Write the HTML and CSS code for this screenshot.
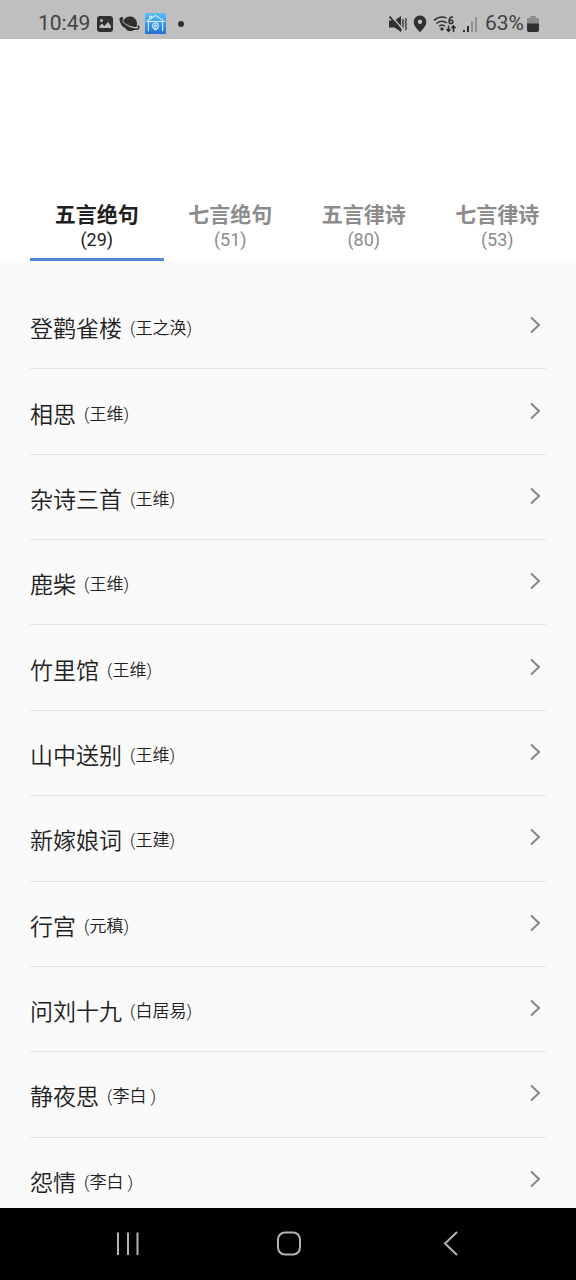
FILE: index.html
```html
<!DOCTYPE html>
<html lang="zh-CN">
<head>
<meta charset="utf-8">
<meta name="viewport" content="width=device-width, initial-scale=1">
<title>五言绝句</title>
<link rel="stylesheet" href="styles.css">
</head>
<body>
<div class="screen">
  <div class="status">
    <div class="status-left">
      <span class="clock">10:49</span>
      <svg width="18" height="18" viewBox="0 0 18 18" aria-hidden="true"><path fill="#303030" fill-rule="evenodd" d="M4 1h10a3 3 0 0 1 3 3v10a3 3 0 0 1-3 3H4a3 3 0 0 1-3-3V4a3 3 0 0 1 3-3zM3.500 13h11.500v-2L12 7l-3.500 4L6 8.500 3.500 11zM5.500 4a1.500 1.500 0 1 0 0 3 1.500 1.500 0 0 0 0-3z"/></svg>
      <svg width="21" height="18" viewBox="0 0 21 18" aria-hidden="true"><path fill="#303030" d="M4 6.500C5.500 2.500 9 1 12 1.500c3.500.6 6 3.500 6 7.500 0 1-.2 2-.6 3C12 12 7 9.500 4 6.500zM4.500 9.500c3.500 2.500 7 4 11.500 4.500-3 3.500-9.500 3-11.500-4.500z"/><path d="M4 3C1.500 2.500.7 4 1.500 5.700 3.500 10 12 14.500 17.500 14.200c2.500-.2 2.800-1.700 1.500-3.700" fill="none" stroke="#303030" stroke-width="1.600"/><path d="M4 3.500C1 5.500 2 9 5.500 12" fill="none" stroke="#303030" stroke-width="2"/></svg>
      <svg width="21" height="21" viewBox="0 0 22 22" aria-hidden="true"><defs><linearGradient id="sky" x1="0" y1="0" x2="0" y2="1"><stop offset="0" stop-color="#59c0f6"/><stop offset="1" stop-color="#2270d2"/></linearGradient></defs><rect width="22" height="22" rx="1" fill="url(#sky)"/><g fill="none" stroke="#dff4ff" stroke-width="1.100"><path d="M1.500 9 11 2.500 20.500 9h-19M3.500 9v10M18.500 9v10M5 6V3.500h2V5"/><circle cx="11" cy="13.500" r="3"/><circle cx="11" cy="13.500" r="1"/><path d="M9.500 17.500h3"/></g></svg>
      <span class="dot"></span>
    </div>
    <div class="status-right">
      <svg width="18" height="18" viewBox="0 0 18 18" aria-hidden="true"><path fill="#303030" d="M0 5.500h5.500L12 1v16l-6.500-4.500H0z"/><path d="m2 .5 12 14" stroke="#bfbfbf" stroke-width="1.500"/><path d="m.5 1.500 12 14" stroke="#303030" stroke-width="1.800"/><path d="M13.500 4l1 1.700-1 1.700 1 1.700-1 1.700 1 1.700M16.500 3l.8 2-.8 2 .8 2-.8 2 .8 2-.8 2" fill="none" stroke="#303030" stroke-width="1.200"/></svg>
      <svg width="14" height="18" viewBox="0 0 14 18" aria-hidden="true"><path fill="#303030" fill-rule="evenodd" d="M7 .5A6.300 6.300 0 0 0 .7 6.800C.7 11 4 14 7 17.300c3-3.300 6.300-6.300 6.300-10.500A6.300 6.300 0 0 0 7 .5zm0 4a2.200 2.200 0 1 1 0 4.400 2.200 2.200 0 0 1 0-4.400z"/></svg>
      <svg width="24" height="18" viewBox="0 0 24 18" aria-hidden="true"><g fill="none" stroke="#303030" stroke-width="1.500"><path d="M1 5.500C5 1.700 10 1.700 13.500 3M3.500 8.500c3-2.800 7.500-2.800 10.500-.5M6 11.300c1.800-1.600 4.200-1.600 6 0M20 2c-3-.5-4 1.500-4 4.500M18 4.900a1.800 1.800 0 1 0 0 3.700 1.800 1.800 0 0 0 0-3.700"/><path d="M15.500 10.500v5.500M13.500 14l2 2.300 2-2.300M20.500 17v-5.500M18.500 13.300l2-2.300 2 2.300"/></g><circle cx="9" cy="14" r="1.700" fill="#303030"/></svg>
      <svg width="16" height="18" viewBox="0 0 16 18" aria-hidden="true"><path fill="#303030" d="M0 15h2v2H0zM4 11h2v6H4z"/><path fill="#929292" d="M8 6h2v11H8zM12 2h2v15h-2z"/></svg>
      <span class="percent">63%</span>
      <svg width="12" height="18" viewBox="0 0 12 18" aria-hidden="true"><path fill="#8b8b8b" d="M3.500 1h5v2H11a1 1 0 0 1 1 1v6H0V4a1 1 0 0 1 1-1h2.500z"/><path fill="#303030" d="M0 8.500h12V15a2 2 0 0 1-2 2H2a2 2 0 0 1-2-2z"/></svg>
    </div>
  </div>

  <header class="tabs" role="tablist">
    <button class="tab tab-active" role="tab" aria-selected="true"><span class="tab-name">五言绝句</span><span class="tab-count">(29)</span></button>
    <button class="tab" role="tab" aria-selected="false"><span class="tab-name">七言绝句</span><span class="tab-count">(51)</span></button>
    <button class="tab" role="tab" aria-selected="false"><span class="tab-name">五言律诗</span><span class="tab-count">(80)</span></button>
    <button class="tab" role="tab" aria-selected="false"><span class="tab-name">七言律诗</span><span class="tab-count">(53)</span></button>
  </header>

  <main class="content">
    <div class="poems">
      <a class="poem" href="#"><span class="title">登鹳雀楼</span><span class="author">(王之涣)</span><svg class="chevron" viewBox="0 0 12 18" aria-hidden="true"><path d="m2 1.500 8 7.500-8 7.500"/></svg></a>
      <a class="poem" href="#"><span class="title">相思</span><span class="author">(王维)</span><svg class="chevron" viewBox="0 0 12 18" aria-hidden="true"><path d="m2 1.500 8 7.500-8 7.500"/></svg></a>
      <a class="poem" href="#"><span class="title">杂诗三首</span><span class="author">(王维)</span><svg class="chevron" viewBox="0 0 12 18" aria-hidden="true"><path d="m2 1.500 8 7.500-8 7.500"/></svg></a>
      <a class="poem" href="#"><span class="title">鹿柴</span><span class="author">(王维)</span><svg class="chevron" viewBox="0 0 12 18" aria-hidden="true"><path d="m2 1.500 8 7.500-8 7.500"/></svg></a>
      <a class="poem" href="#"><span class="title">竹里馆</span><span class="author">(王维)</span><svg class="chevron" viewBox="0 0 12 18" aria-hidden="true"><path d="m2 1.500 8 7.500-8 7.500"/></svg></a>
      <a class="poem" href="#"><span class="title">山中送别</span><span class="author">(王维)</span><svg class="chevron" viewBox="0 0 12 18" aria-hidden="true"><path d="m2 1.500 8 7.500-8 7.500"/></svg></a>
      <a class="poem" href="#"><span class="title">新嫁娘词</span><span class="author">(王建)</span><svg class="chevron" viewBox="0 0 12 18" aria-hidden="true"><path d="m2 1.500 8 7.500-8 7.500"/></svg></a>
      <a class="poem" href="#"><span class="title">行宫</span><span class="author">(元稹)</span><svg class="chevron" viewBox="0 0 12 18" aria-hidden="true"><path d="m2 1.500 8 7.500-8 7.500"/></svg></a>
      <a class="poem" href="#"><span class="title">问刘十九</span><span class="author">(白居易)</span><svg class="chevron" viewBox="0 0 12 18" aria-hidden="true"><path d="m2 1.500 8 7.500-8 7.500"/></svg></a>
      <a class="poem" href="#"><span class="title">静夜思</span><span class="author">(李白 )</span><svg class="chevron" viewBox="0 0 12 18" aria-hidden="true"><path d="m2 1.500 8 7.500-8 7.500"/></svg></a>
      <a class="poem" href="#"><span class="title">怨情</span><span class="author">(李白 )</span><svg class="chevron" viewBox="0 0 12 18" aria-hidden="true"><path d="m2 1.500 8 7.500-8 7.500"/></svg></a>
    </div>
  </main>

  <nav class="navbar">
    <button class="nav-button" aria-label="最近"><svg width="26" height="26" viewBox="0 0 26 26"><path d="M4 1.500v22.500M14 1.500v22.500M23.500 1.500v22.500"/></svg></button>
    <button class="nav-button" aria-label="主页"><svg width="26" height="26" viewBox="0 0 26 26"><rect x="2" y="1.500" width="22" height="22" rx="7"/></svg></button>
    <button class="nav-button" aria-label="返回"><svg width="26" height="26" viewBox="0 0 26 26"><path d="M19 1 7 12.500l12 11.500"/></svg></button>
  </nav>
</div>
</body>
</html>
```
FILE: styles.css
```css
* {
  box-sizing: border-box;
}

body {
  margin: 0;
  color: #202020;
  background: #fafafa;
  font-family: Roboto, "Noto Sans CJK SC", sans-serif;
}

button {
  padding: 0;
  border: 0;
  background: none;
  color: inherit;
  font: inherit;
}

.screen {
  display: flex;
  flex-direction: column;
  height: 100vh;
}

.status {
  display: flex;
  align-items: center;
  justify-content: space-between;
  padding: 12px 37px 4px 38px;
  background: #bfbfbf;
  color: #424242;
  font-size: 21px;
  line-height: 23px;
}

.status-left,
.status-right {
  display: flex;
  align-items: center;
}

.status-left {
  gap: 5px;
}

.status-right {
  gap: 6px;
}

.clock {
  margin-right: 1px;
}

.percent {
  margin-right: -3px;
}

.dot {
  width: 6px;
  height: 6px;
  margin-left: 7px;
  border-radius: 50%;
  background: #303030;
}

.tabs {
  display: grid;
  grid-template-columns: repeat(4, 1fr);
  padding: 162px 12px 0 30px;
  background: #fff;
}

.tab {
  display: flex;
  flex-direction: column;
  align-items: center;
  padding-bottom: 7px;
  border-bottom: 3px solid transparent;
  color: #8c8c8c;
}

.tab-active {
  border-color: #4d88d6;
  color: #202020;
}

.tab-name {
  font-size: 21px;
  font-weight: 700;
  line-height: 28px;
}

.tab-count {
  font-size: 18px;
  line-height: 22px;
}

.content {
  flex: 1;
  min-height: 0;
  padding: 23px 30px 0;
  overflow: hidden;
}

/* The last row runs on under the navigation bar. */
.poems {
  display: grid;
  grid-auto-rows: 1fr;
  height: calc(100% + 15px);
  font-weight: 350;
}

.poem {
  display: flex;
  align-items: center;
  gap: 8px;
  padding-top: 6px;
  border-bottom: 1px solid #e4e4e4;
  color: inherit;
  text-decoration: none;
}

.title {
  margin-top: 2px;
  font-size: 23px;
  line-height: 32px;
}

.author {
  margin-bottom: 2px;
  font-size: 17px;
  line-height: 24px;
}

.chevron {
  width: 12px;
  height: 18px;
  margin: 0 5px 8px auto;
  fill: none;
  stroke: #858585;
  stroke-width: 2;
}

.navbar {
  display: flex;
  justify-content: space-between;
  padding: 22px 112px 22px 114px;
  background: #000;
}

.nav-button {
  display: flex;
  padding: 1px 0;
}

.nav-button svg {
  fill: none;
  stroke: #b4b4b4;
  stroke-width: 2;
}
```
